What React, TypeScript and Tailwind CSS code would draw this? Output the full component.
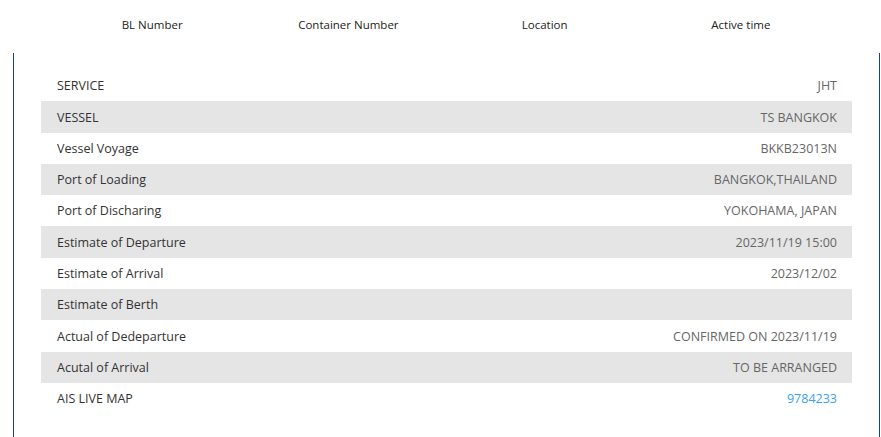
const rows: [string, string, boolean?][] = [
  ["SERVICE", "JHT"],
  ["VESSEL", "TS BANGKOK"],
  ["Vessel Voyage", "BKKB23013N"],
  ["Port of Loading", "BANGKOK,THAILAND"],
  ["Port of Discharing", "YOKOHAMA, JAPAN"],
  ["Estimate of Departure", "2023/11/19 15:00"],
  ["Estimate of Arrival", "2023/12/02"],
  ["Estimate of Berth", ""],
  ["Actual of Dedeparture", "CONFIRMED ON 2023/11/19"],
  ["Acutal of Arrival", "TO BE ARRANGED"],
  ["AIS LIVE MAP", "9784233", true],
];

export default function App() {
  return (
    <div
      className="w-[881px] h-[437px] bg-white overflow-hidden"
      style={{ fontFamily: '"Open Sans", "Noto Sans", sans-serif' }}
    >
      <div className="ml-[54px] w-[785px] h-[53px] grid grid-cols-4 items-center text-[11.5px] text-[#222]">
        <div className="text-center pb-[3px]">BL Number</div>
        <div className="text-center pb-[3px]">Container Number</div>
        <div className="text-center pb-[3px]">Location</div>
        <div className="text-center pb-[3px]">Active time</div>
      </div>
      <div className="ml-[13px] w-[867px] h-[400px] border-l border-r border-[#1c3f8c] pt-[17px] px-[27px]">
        {rows.map(([label, value, link], i) => (
          <div
            key={label}
            className={`h-[31.3px] flex items-center justify-between pl-[16px] pr-[15px] pt-[2px] text-[12.5px] ${
              i % 2 === 1 ? "bg-[#e5e5e5]" : ""
            }`}
          >
            <span className="text-[#333]">{label}</span>
            <span className={link ? "text-[#3aa0f5]" : "text-[#666]"}>{value}</span>
          </div>
        ))}
      </div>
    </div>
  );
}
